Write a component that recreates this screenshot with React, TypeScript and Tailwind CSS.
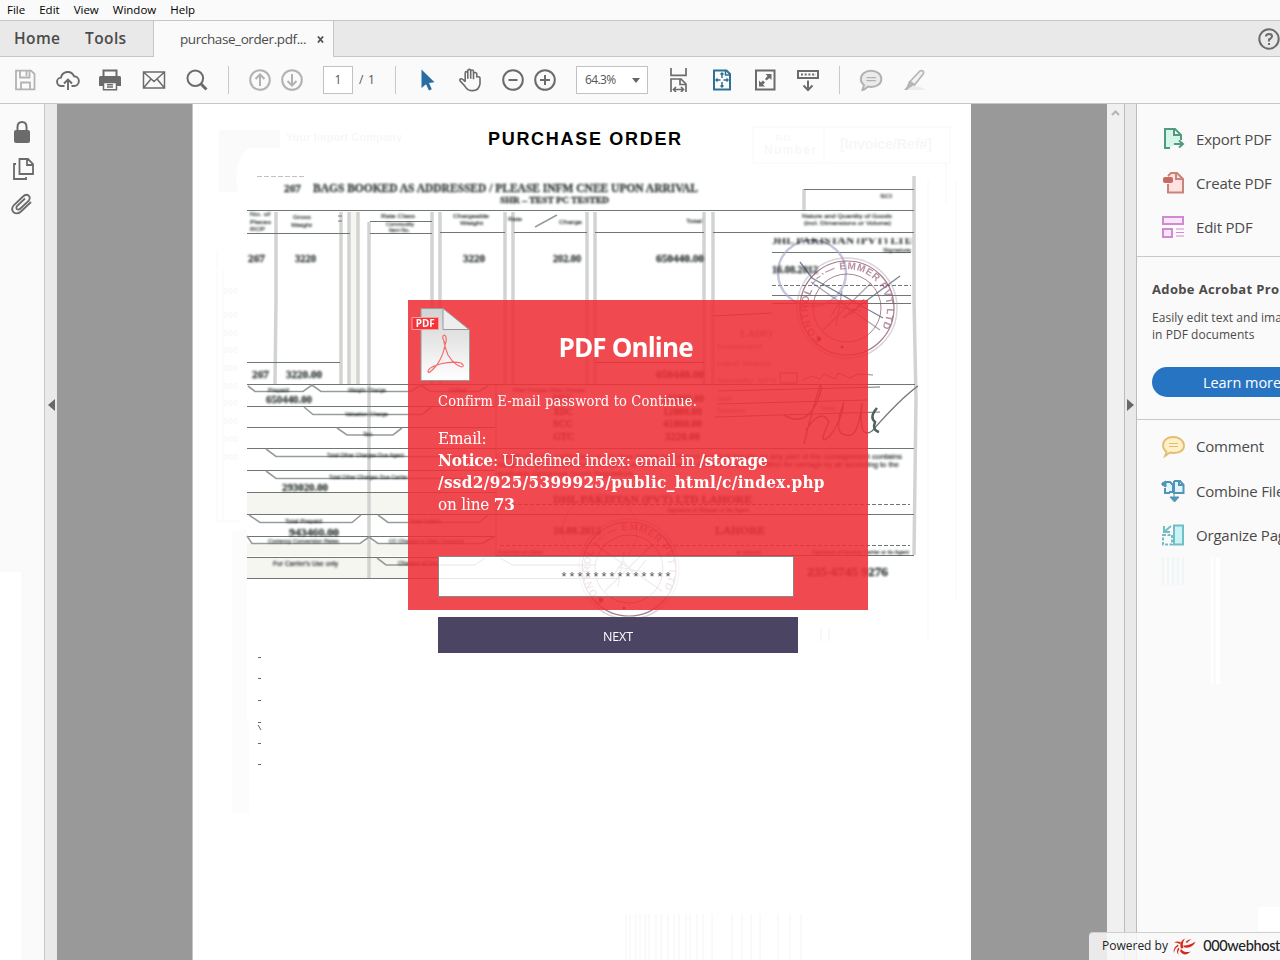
import React from "react";

type TextRow = [number, number, number, string, number?];

const STROKE = "#6b6b6b";

function Icon({ className = "", stroke = STROKE, children }: { className?: string; stroke?: string; children: React.ReactNode }) {
  return (
    <svg viewBox="0 0 24 24" className={"h-6 w-6 shrink-0 " + className} fill="none" stroke={stroke} strokeWidth={2}>
      {children}
    </svg>
  );
}

function Divider() {
  return <div className="ml-[19px] h-7 w-px shrink-0 bg-[#c9c9c9]" />;
}

function Toolbar() {
  return (
    <div className="flex h-[47px] shrink-0 items-center border-b border-[#c6c6c6] bg-[#fafafa] text-[#555]">
      <Icon className="ml-[13px]" stroke="#b3b3b3">
        <path d="M3 2.7H18L21.5 6V21.3H3ZM7 3V9.5H16.5V3M13.5 3V8M8 21V14.5H17V21" strokeWidth={1.8} />
      </Icon>
      <Icon className="ml-[19px]">
        <path d="M8.5 18H5.5A4.2 4.2 0 0 1 5 9.6A6.8 6.8 0 0 1 18 8.2A4.8 4.8 0 0 1 18 18H15.5M12 22V12M8 15.5L12 11.5L16 15.5" strokeWidth={1.9} />
      </Icon>
      <Icon className="ml-[18px]">
        <path d="M5.5 8V2.5H18.5V8" />
        <path d="M1 9.5Q1 8 2.5 8H21.5Q23 8 23 9.5V18H19V15H5V18H1Z" fill={STROKE} stroke="none" />
        <path d="M5.5 14.5H18.5V21.8H5.5ZM9 16.8H15M9 19H15" strokeWidth={1.5} />
      </Icon>
      <Icon className="ml-5">
        <path d="M1.5 4H22.5V20H1.5ZM1.5 4L12 13.5L22.5 4M1.5 20L9 11M22.5 20L15 11" strokeWidth={1.5} />
      </Icon>
      <Icon className="ml-[19px]">
        <circle cx="10.3" cy="10.3" r="7.8" />
        <path d="M15.8 15.8L21.5 21.5" strokeWidth={3} />
      </Icon>
      <Divider />
      <Icon className="ml-[19px]" stroke="#b1b1b1">
        <circle cx="12" cy="12" r="9.8" />
        <path d="M12 18V7M7.5 11L12 6.5L16.5 11" />
      </Icon>
      <Icon className="ml-2" stroke="#b1b1b1">
        <circle cx="12" cy="12" r="9.8" />
        <path d="M12 6V17M7.5 13L12 17.5L16.5 13" />
      </Icon>
      <div className="ml-[19px] flex h-7 w-[30px] shrink-0 items-center justify-center border border-[#c2c2c2] bg-white text-[12px]">1</div>
      <div className="ml-1.5 w-[17px] shrink-0 whitespace-pre text-[12px] tracking-[0.8px]">/ 1</div>
      <Divider />
      <Icon className="ml-[19px]" stroke="none">
        <path d="M6.5 1.5V20L11 16.3L14 22.5L16.8 21.2L14 15L19.5 14.3Z" fill="#2a6da3" />
      </Icon>
      <Icon className="ml-[19px]">
        <path d="M7.2 14V5.2Q7.2 3.8 8.5 3.8Q9.8 3.8 9.8 5.2V11V3Q9.8 1.6 11.2 1.6Q12.7 1.6 12.7 3V11V3.5Q12.7 2.2 14.1 2.2Q15.5 2.2 15.5 3.5V11.5V6Q15.5 4.7 17 4.7Q18.8 4.7 18.8 6.500V9Q22.3 8.5 22 11V16Q21 22.8 14.5 22.8Q9.5 22.8 7 18.5L2 13Q1.2 10.8 3.5 10.9Q5.5 11.4 7.2 14" strokeWidth={1.6} transform="translate(0 -.2)" />
      </Icon>
      <Icon className="ml-[19px]">
        <circle cx="12" cy="12" r="9.8" />
        <path d="M7.5 12H16.5" />
      </Icon>
      <Icon className="ml-2">
        <circle cx="12" cy="12" r="9.8" />
        <path d="M7 12H17M12 7V17" />
      </Icon>
      <div className="ml-[19px] flex h-7 w-[72px] shrink-0 items-center justify-between border border-[#c2c2c2] bg-white pr-[7px] pl-2 text-[12px] tracking-[-0.6px]">
        <span>64.3%</span>
        <svg viewBox="0 0 8 5" className="h-[5px] w-2"><path d="M0 0H8L4 5Z" fill="#666" /></svg>
      </div>
      <Icon className="ml-[18px]">
        <path d="M5 0V7.3H20V0M5 24V11H15L20 16V24M14 11V16.5H20M8 21.5H17M10 19L7.5 21.5L10 24M15 19L17.5 21.5L15 24" strokeWidth={1.7} />
      </Icon>
      <Icon className="ml-5" stroke="#2f7195">
        <path d="M4 2.5H16.5L20 6V21.5H4Z" />
        <path d="M12 5V10M12 14V19M6 12H10.5M13.5 12H18M10.5 6.5L12 5L13.5 6.5M10.5 17.5L12 19L13.5 17.5M7.5 10.5L6 12L7.5 13.5M16.5 10.5L18 12L16.5 13.5M15.5 3V7H20" strokeWidth={1.5} />
      </Icon>
      <Icon className="ml-[19px]">
        <path d="M3 2.5H21.5V21.5H3Z" />
        <path d="M12.5 6H18.5V12L16.5 10L13.5 12.5L12 11L14.5 8ZM6 12.5V18.5H12L10 16.5L12 14.5L10 12.5L8 14.5Z" fill={STROKE} stroke="none" />
      </Icon>
      <Icon className="ml-[19px]">
        <path d="M2 3H22V10H2Z" />
        <path d="M5 6.5H20" strokeDasharray="2 1.7" />
        <path d="M12 12.5V21M7.5 17.5L12 22L16.5 17.5" />
      </Icon>
      <Divider />
      <Icon className="ml-[19px]" stroke="#b2b2b2">
        <path d="M3.5 22L5 17Q1.8 14.5 1.8 11.3C1.8 6.5 6 2.7 12 2.7S22.3 6.2 22.3 11S18 19 12 19L9 18.5Q6 21.5 3.5 22Z" fill="#ebebeb" />
        <path d="M7.5 9.7H17M7.5 12.7H17" strokeWidth={1.2} />
      </Icon>
      <Icon className="ml-[19px]" stroke="#b5b5b5">
        <path d="M3 21Q16 15 23 22H3Z" fill="#ececec" stroke="none" />
        <path d="M8 13.5L18 3Q22 1.5 21.5 5.5L12.5 17Z" fill="#f3f3f3" strokeWidth={1.7} />
        <path d="M7 13L12.5 17L8 19.5L5 22H2L4.5 19Z" fill="#b5b5b5" stroke="none" />
      </Icon>
    </div>
  );
}

function Stamp() {
  return (
    <g fill="none">
      <circle cx="0" cy="0" r="47" stroke="#875063" strokeWidth="1.2" opacity=".75" />
      <circle cx="0" cy="0" r="50" stroke="#a293ad" strokeWidth="1.500" opacity=".4" />
      <circle cx="0" cy="0" r="34" stroke="#875063" strokeWidth="1" opacity=".7" />
      <path id="seal-ring" d="M-25 31A39.500 39.500 0 1 1 28 29" />
      <text className="font-['Liberation_Sans'] font-bold" fontSize="10" fill="#9b6278" opacity=".7">
        <textPath href="#seal-ring" textLength="178">CONTROL ~~·— EMMER PVT LTD</textPath>
      </text>
      <path d="M-36 -26L33 22M-24 22L24 -25M-17 9L-6 -8L5 6L17 -9M-11 -2L14 3M-5 -17L-11 18" stroke="#77617d" strokeWidth="1.2" opacity=".6" />
      <circle cx="-5" cy="39" r="1.5" fill="#754552" />
      <circle cx="-28" cy="31" r="2.3" fill="#754552" />
    </g>
  );
}

const boldRows: TextRow[] = [
  [284, 192, 11, "267", 17],
  [313, 191.5, 12, "BAGS BOOKED AS ADDRESSED / PLEASE INFM CNEE UPON ARRIVAL", 385],
  [500, 203, 9, "SHR – TEST PC TESTED", 109],
  [248, 262, 10, "267", 17], [295, 262, 10, "3220", 21], [463, 262, 10, "3220", 22],
  [553, 262, 10, "202.00", 28], [656, 262, 11, "650440.00", 48],
  [252, 378, 10, "267", 17], [286, 378, 10, "3220.00", 36], [656, 378, 11, "650440.00", 48],
  [266, 403, 11, "650440.00", 46], [282, 491, 11, "293020.00", 46], [289, 536, 11, "943460.00", 50],
  [553, 402, 10, "MYC", 20], [553, 415, 10, "XDC", 20], [553, 427, 10, "SCC", 20], [553, 440, 10, "GTC", 21],
  [663, 402, 10, "235060.00", 41], [663, 415, 10, "12880.00", 39], [663, 427, 10, "41860.00", 39], [665, 440, 10, "3220.00", 35],
  [553, 503, 11, "DHL PAKISTAN (PVT) LTD LAHORE", 199],
  [553, 534, 10, "16.08.2012", 48], [715, 534, 10, "LAHORE", 50],
  [772, 273, 10, "16.08.2012", 46], [807, 576, 12, "235-6745 9276", 81],
];

const smallRows: TextRow[] = [
  [250, 216, 6, "No. of", 20], [250, 224, 6, "Pieces", 21], [250, 231, 6, "RCP", 15],
  [293, 219, 6, "Gross", 18], [291, 227, 6, "Weight", 21], [381, 218, 6, "Rate Class", 34],
  [386, 226, 6, "Commodity", 28], [389, 232, 6, "Item No.", 21],
  [453, 218, 6, "Chargeable", 36], [460, 225, 6, "Weight", 23], [508, 221, 6, "Rate", 14],
  [559, 224, 6, "Charge", 23], [686, 223, 6, "Total", 16], [880, 198, 6, "SCI", 12],
  [802, 218, 6, "Nature and Quantity of Goods", 90], [804, 225, 6, "(incl. Dimensions or Volume)", 87],
  [883, 252, 6, "Signature", 28], [268, 392, 6, "Prepaid", 21], [348, 392, 6, "Weight Charge", 38],
  [449, 392, 6, "Collect", 18], [512, 392, 6, "Other Charges Other Charges", 73],
  [345, 416, 6, "Valuation Charge", 43], [363, 436, 6, "Tax"],
  [327, 457, 6, "Total Other Charges Due Agent", 77], [329, 479, 6, "Total Other Charges Due Carrier", 79],
  [285, 523, 6, "Total Prepaid", 37], [409, 523, 6, "Total Collect", 32],
  [268, 543, 6, "Currency Conversion Rates", 71], [389, 543, 6, "CC Charges in Dest. Currency", 75],
  [273, 566, 6.5, "For Carrier's Use only", 65], [398, 565, 6, "Charges at Destination", 59],
  [667, 512, 6, "Signature of Shipper or his Agent", 82],
  [498, 554, 6, "Executed on (date)", 45], [736, 554, 6, "at (place)", 25],
  [812, 554, 6, "Signature of Issuing Carrier or its Agent", 97],
  [497, 459, 7, "I certify that the particulars on the face hereof are correct and that insofar as any part of the consignment contains", 405],
  [497, 467, 7, "dangerous goods, such part is properly described by name and is in proper condition for carriage by air according to the", 402],
  [497, 476, 7, "applicable Dangerous Goods Regulations.", 138],
];

const securityRows: TextRow[] = [
  [717, 349, 8, "Document", 45], [717, 366, 8, "Hand Search", 54], [717, 383, 8, "Security: SPX", 60],
  [717, 401, 7, "Date:"], [717, 413, 7, "Screener:"], [820, 411, 7, "Time:"],
];

function Rows({ rows }: { rows: TextRow[] }) {
  return (
    <>
      {rows.map(([x, y, size, label, len], i) => (
        <text key={i} x={x} y={y} fontSize={size} textLength={len} lengthAdjust="spacingAndGlyphs">{label}</text>
      ))}
    </>
  );
}

function WaybillScan() {
  return (
    <svg viewBox="192 104 779 856" className="h-[856px] w-[779px]" role="img">
      <g fill="#fafafa">
        <path d="M219 130H280V148H250Q232 158 238 192H219Z" />
        <path d="M232 530H247V722H232ZM232 722H249V814H232Z" opacity=".55" />
      </g>
      <g stroke="#f8f8f8" fill="none">
        <path d="M217 250V521H240M223 270V520M753 127H950V163H753ZM824 127V163M946 163V205M928 180V640M956 180V600" />
      </g>
      <g className="font-['Liberation_Sans'] font-bold [filter:blur(0.6px)]" fill="#f7f7f7">
        <text x="286" y="141" fontSize="11" textLength="116">Your Import Company</text>
        <text x="776" y="141" fontSize="9">P.O.</text>
        <text x="764" y="154" fontSize="12" textLength="52">Number</text>
        <text x="840" y="149" fontSize="15" textLength="92">[Invoice/Ref#]</text>
        {[290, 314, 332, 349, 367, 385, 402, 420, 438, 456].map((y) => (
          <text key={y} x="223" y={y + 4} fontSize="9">000</text>
        ))}
      </g>
      <g stroke="#f4f4f4">
        {[626, 630, 636, 640, 645, 649, 656, 661, 668, 674, 679, 686, 690, 697, 703, 712, 732, 742, 751, 760, 778, 790, 801].map((x) => (
          <path key={x} d={`M${x} 914V960`} />
        ))}
      </g>

      <g fill="#f6f6f1">
        <path d="M247 492H495V514H247ZM247 543H495V556H247ZM247 557H495V578H247ZM350 212H358V384H350Z" />
      </g>
      <g className="[filter:blur(0.35px)]">
        <g fill="none" stroke="#d2d4d2" strokeWidth="3.5">
          <path d="M276 212V300L275 384M341 212V384M349 212V384M358 212V384M369 222V578M432 212V384M440 212V384M505 212V384M513 212V384M587 212V384M595 212V384M704 212V384M713 212V384M914 176V300L916 400L914 555M804 189V210" />
          <path d="M496 384V578" strokeWidth="2" />
        </g>
        <g fill="none" stroke="#6f7775" strokeWidth="1">
          <path d="M247 210.500H914M247 233.500H350M370 221.500H432M370 233.500H432M440 232.500H505M514 232.500H587M595 232.500H704M713 232.500H914M804 189.500H914M247 362.500H340M595 362.500H704" />
          <path d="M247 384.500H915M247 406.500H495M247 427.500H495M247 448.500H914M247 470.500H495M247 492.500H495M247 514.500H914M247 536.500H495M247 557.500H495M495 555.500H914M247 578.500H620" />
          <path d="M772 252.500H911M772 295.500H911M772 303.500H911M713 316L772 313M718 391L880 387M718 404L868 400M715 417L880 412" />
          <path d="M772 285.500H911M500 504.500H910M500 545.500H910" strokeDasharray="4 2" />
        </g>
        <g fill="none" stroke="#979d9b" strokeWidth="1.6">
          <path d="M248 386L255 391.500H303L312 385L321 391.500H411L421 385L430 391.500H479L488 386" />
          <path d="M304 407L313 414.500H422L432 407M337 428L347 435H393L402 428M266 449L276 456.500H464M266 471L276 478.500H464M249 515L260 522.500H352L361 515M378 515L388 522.500H479L488 515M247 536L252 543.500H360L369 537L378 543.500H482L494 537M377 558L386 565H475L485 558" />
          <path d="M535 227L557 215" />
        </g>
        <path d="M338 216H342M338 221H342" stroke="#777" />
        <path d="M257 176.500H306" stroke="#999" strokeDasharray="5 2" opacity=".6" />
        <path d="M780 373H797V383H780ZM803 380L812 376L820 379L824 374L835 379L838 373L850 378L858 374L873 375" stroke="#888" fill="none" />
        <ellipse cx="812" cy="273" rx="34" ry="33" fill="none" stroke="#a7a8c9" strokeWidth="2.500" opacity=".65" />
        <path d="M800 262L812 278L883 318M843 318L900 276" fill="none" stroke="#5e6685" strokeWidth="1.400" opacity=".8" />
        <circle cx="600" cy="531" r="37" fill="none" stroke="#92889a" opacity=".45" />
        <path d="M784 415Q805 428 817 402Q824 384 820 386Q812 410 804 444M806 430Q821 407 829 422Q817 447 829 437Q842 421 844 402M844 402Q832 434 846 435Q858 440 862 403Q858 441 872 431Q900 399 918 386" fill="none" stroke="#747976" strokeWidth="1.500" />
        <path d="M877 408Q869 417 875 422Q872 430 879 432" fill="none" stroke="#4d6258" strokeWidth="2.500" />
      </g>
      <g className="[filter:blur(0.9px)]">
        <g className="font-['Liberation_Serif'] font-bold" fill="#3a4240" stroke="#3a4240" strokeWidth=".35"><Rows rows={boldRows} /></g>
        <g className="font-['Liberation_Sans']" fill="#2b3331" stroke="#2b3331" strokeWidth=".2"><Rows rows={smallRows} /></g>
        <g className="font-['Liberation_Sans']" fill="#777"><Rows rows={securityRows} /></g>
        <svg x="772" y="238" width="139" height="6">
          <text x="-3" y="5.500" fontSize="10" textLength="144" lengthAdjust="spacingAndGlyphs" className="font-['Liberation_Serif'] font-bold" fill="#202624">DHL PAKISTAN (PVT) LTD</text>
        </svg>
        <svg x="740" y="326" width="32" height="14">
          <text x="0" y="11" fontSize="11" className="font-['Liberation_Serif'] font-bold" fill="#888">LAHORE</text>
        </svg>
      </g>
      <g className="[filter:blur(0.4px)]">
        <g transform="translate(847 308)"><Stamp /></g>
        <g transform="translate(629 569)"><Stamp /></g>
      </g>
      <path d="M258 657.500H261M258 678.500H261M258 700.500H261M258 722.500H261M258 725L261 730M258 743.500H261M258 764.500H261" stroke="#666" fill="none" />
      <path d="M821 629V641M829 629V641" stroke="#f0f0f0" />
    </svg>
  );
}

function PdfFile() {
  return (
    <svg viewBox="0 0 64 78" className="h-[78px] w-16">
      <defs>
        <linearGradient id="sheet" x1="0" y1="0" x2="0" y2="1">
          <stop offset="0" stopColor="#d2d2d2" />
          <stop offset="1" stopColor="#ffffff" />
        </linearGradient>
      </defs>
      <path d="M10 3.500H32L58.500 25V75.500H10Z" fill="url(#sheet)" stroke="#9a9a9a" />
      <path d="M32 3.500V24.500H58Z" fill="#eee" stroke="#999" />
      <path d="M1 12.500H27.500V24.500H1Z" fill="#f43537" stroke="#ff9ba0" />
      <text x="14.300" y="22" textAnchor="middle" fontSize="10" textLength="19" lengthAdjust="spacingAndGlyphs" className="font-['Open_Sans'] font-bold" fill="#fff">PDF</text>
      <path d="M34 38Q31 33 32 31Q34 29 35 32Q36 36 34 40Q32 52 25 61Q18 69 17 67Q16 63 29 59Q42 56 50 58Q54 61 51 62Q44 61 37 50Q34 43 33 37" fill="none" stroke="#f46b6b" strokeWidth="1.200" />
    </svg>
  );
}

function SignInCard() {
  return (
    <div className="absolute top-[300px] left-[408px] flex h-[310px] w-[460px] flex-col bg-[#ef3038]/88 text-white">
      <div className="flex h-[92px] shrink-0 pt-[5px] pl-[2.5px]">
        <PdfFile />
        <h1 className="ml-[84px] pt-[22px] text-[26px] leading-10 font-bold tracking-[-0.85px] whitespace-nowrap">PDF Online</h1>
      </div>
      <div className="flex flex-col pl-[30px] font-['DejaVu_Serif_Condensed','DejaVu_Serif',serif] whitespace-nowrap">
        <p className="text-[14.5px] leading-[18px] tracking-[0.15px]">Confirm E-mail password to Continue.</p>
        <div className="mt-[17px] text-[17px] leading-[22px] tracking-[-0.2px]">
          <div>Email:</div>
          <div><b>Notice</b><span className="tracking-[-0.3px]">: Undefined index: email in </span><b>/storage</b></div>
          <div className="tracking-[0.33px]"><b>/ssd2/925/5399925/public_html/c/index.php</b></div>
          <div>on line <b>73</b></div>
        </div>
      </div>
      <div className="relative mt-[41px] ml-[30px] flex h-[41px] w-[356px] shrink-0 items-center justify-center border border-[#888] bg-white pt-[3px] font-['Liberation_Mono'] text-[13.33px] text-[#555]">
        <svg viewBox="439 557 354 39" className="absolute inset-0 h-full w-full opacity-20">
          <path d="M439 578.500H620M439 565H475L485 558M500 558L512 565H595" stroke="#888" fill="none" />
          <g transform="translate(629 569)"><Stamp /></g>
        </svg>
        <span className="relative">**************</span>
      </div>
      <div className="mt-5 ml-[30px] flex h-9 w-[360px] shrink-0 items-center justify-center bg-[#4b4563] pt-1 text-[12.5px] font-medium tracking-[-0.1px]">NEXT</div>
    </div>
  );
}

function ToolRow({ label, children }: { label: string; children: React.ReactNode }) {
  return (
    <div className="flex h-11 items-center pl-6">
      {children}
      <span className="ml-[11px] text-[15px] tracking-[-0.2px] whitespace-nowrap">{label}</span>
    </div>
  );
}

function ToolsPane() {
  return (
    <aside className="w-[144px] shrink-0 overflow-hidden border-l border-[#bcbcbc] bg-[#fafafa] text-[#4b4b4b]">
      <div className="h-[153px] border-b border-[#c9c9c9] pt-[13px]">
        <ToolRow label="Export PDF">
          <Icon stroke="#519a82">
            <path d="M9 21H4V2H14L20 8V13M13 2V8H20" fill="#d5f5e9" />
            <path d="M13 17H21M18 13.500L22 17L18 20.500" />
          </Icon>
        </ToolRow>
        <ToolRow label="Create PDF">
          <Icon stroke="#c8837b">
            <path d="M7 13V21.500H22V8L16 2H10L7 5M15 2V8H22" fill="#ffe2df" />
            <rect x="2" y="6" width="10" height="6" rx="2" fill="#c46b64" stroke="none" />
          </Icon>
        </ToolRow>
        <ToolRow label="Edit PDF">
          <Icon stroke="#ce8bd0">
            <path d="M2 2H22V9H2ZM2 14H11V22H2Z" fill="#fae6fb" />
            <path d="M15 14H23M15 17.500H23M15 21H23" strokeWidth={1.2} />
          </Icon>
        </ToolRow>
      </div>
      <div className="h-[163px] border-b border-[#c9c9c9] pt-[23px] pl-[15px] whitespace-nowrap">
        <div className="text-[13px] leading-[18px] font-bold tracking-[0.35px]">Adobe Acrobat Pro DC</div>
        <div className="mt-[11px] text-[12px] leading-[17px] tracking-[0.05px]">Easily edit text and images<br />in PDF documents</div>
        <div className="mt-6 flex h-[30px] w-[190px] items-center rounded-full bg-[#2774c2] pt-px pl-[51px] text-[14.5px] tracking-[-0.05px] text-white">Learn more</div>
      </div>
      <div className="pt-1">
        <ToolRow label="Comment">
          <Icon stroke="#e2bd72">
            <path d="M4 22L5.500 18Q2 15 2 11.500C2 6 6.500 3 12 3S23 6 23 11.500S18 19 12 19L9 18.500Z" fill="#fff0c9" strokeWidth={1.8} />
            <path d="M8 9.500H17M8 12.500H17" strokeWidth={1.2} />
          </Icon>
        </ToolRow>
        <div className="pt-px">
          <ToolRow label="Combine Files">
            <Icon stroke="#5194b6">
              <path d="M9 14H4V9M4 3H9L12 6V13H8M13 2H19L22.500 6V14H13V2M18 2V6H22" fill="#e1f5ff" />
              <path d="M1 4L5 2V8L1 6ZM13 14V18M9 18H18L13.500 23Z" fill="#5194b6" strokeWidth={1} />
            </Icon>
          </ToolRow>
        </div>
        <ToolRow label="Organize Pages">
          <Icon stroke="#73bdc4">
            <path d="M13 2.500H22V21.500H13Z" fill="#c9f3f6" />
            <path d="M2 12H11V21.500H2Z" strokeDasharray="3 1.500" />
            <path d="M3 3V9H9M3 9L10 3" />
          </Icon>
        </ToolRow>
        <div className="ml-[25px] flex gap-[3px]">
          {[0, 1, 2, 3, 4].map((n) => <div key={n} className="h-[28px] w-0.5 bg-[#f0f6f8]" />)}
          <div className="ml-6 h-[127px] w-0.5 bg-white" />
          <div className="h-[127px] w-1 bg-white" />
        </div>
      </div>
    </aside>
  );
}

export default function App() {
  return (
    <div className="relative flex h-[960px] w-[1280px] flex-col overflow-hidden bg-[#fafafa] font-['Open_Sans',sans-serif] text-[#222]">
      <nav className="flex h-5 shrink-0 items-center gap-3.5 pl-[7px] text-[11.5px] text-black">
        <span>File</span><span>Edit</span><span>View</span><span>Window</span><span>Help</span>
      </nav>
      <div className="flex h-[37px] shrink-0 border-t border-[#c6c6c6] bg-[#e9e9e9] text-[#4b4b4b]">
        <div className="flex w-[154px] items-center border-r border-b border-[#c6c6c6] pt-px pl-3.5 text-[15.5px] font-semibold tracking-[0.4px]">
          <span className="w-[71px]">Home</span><span>Tools</span>
        </div>
        <div className="flex w-[180px] items-center border-r border-[#c6c6c6] bg-[#fafafa] pl-[26px] text-[13.5px] tracking-[-0.4px]">
          <span className="w-[137px]">purchase_order.pdf...</span>
          <svg viewBox="0 0 8 8" className="h-[7px] w-[7px]" stroke="#555" strokeWidth="2"><path d="M1 .5L7 7.5M7 .5L1 7.5" /></svg>
        </div>
        <div className="flex flex-1 items-center justify-end border-b border-[#c6c6c6]">
          <Icon className="mr-[-1px]"><circle cx="12" cy="12" r="9.700" /><path d="M9 9.500Q9 7 12 7T15 9.500Q15 11 12 12.500V14.500M12 16V18" /></Icon>
        </div>
      </div>
      <Toolbar />
      <div className="flex min-h-0 flex-1">
        <div className="flex w-[45px] shrink-0 flex-col items-center border-r border-[#c6c6c6] pt-4">
          <Icon>
            <path d="M7.500 11V7Q7.500 2 12 2T16.500 7V11" />
            <rect x="4" y="10" width="16" height="13" rx="2" fill={STROKE} stroke="none" />
          </Icon>
          <Icon className="mt-[13px] ml-0.5">
            <path d="M8.500 2H17L22 7V17H8.500ZM16 2V8H22M5 7H3V22H15V20" strokeWidth={1.8} />
          </Icon>
          <Icon className="mt-[11px]">
            <path d="M16 6L8 13.500Q6.500 16 8.500 17Q10 17.500 12 15.500L19.500 8.500Q22 5 19.500 3Q17 1 14 4L5 12.500Q1.500 16.500 4.500 19.700Q8 22.500 12 19L22 9.500" strokeWidth={1.8} transform="translate(-1 .5)" />
          </Icon>
        </div>
        <div className="flex w-3 shrink-0 items-start justify-center bg-[#e9e9e9] pt-[295px]">
          <svg viewBox="0 0 7 12" className="h-3 w-[7px]"><path d="M7 0V12L0 6Z" fill="#686868" /></svg>
        </div>
        <div className="flex w-[1050px] shrink-0 bg-[#999] pl-[135px]">
          <div className="relative w-[779px] shrink-0 border-l border-[#c4c4c4] bg-white">
            <div className="-ml-px"><WaybillScan /></div>
            <div className="absolute top-[24px] left-[295px] font-['Liberation_Sans'] text-[18px] leading-[22px] font-bold tracking-[1.7px] whitespace-nowrap text-black">PURCHASE ORDER</div>
          </div>
        </div>
        <div className="w-[18px] shrink-0 border-r border-[#bcbcbc] bg-[#f0f0f0] pt-1.5 pl-1">
          <svg viewBox="0 0 9 6" className="h-1.5 w-[9px]"><path d="M1 5L4.500 1.500L8 5" stroke="#b4b4b4" strokeWidth="2" fill="none" /></svg>
        </div>
        <div className="flex w-[11px] shrink-0 items-start justify-center bg-[#e9e9e9] pt-[295px]">
          <svg viewBox="0 0 7 12" className="h-3 w-[7px]"><path d="M0 0V12L7 6Z" fill="#686868" /></svg>
        </div>
        <ToolsPane />
      </div>
      <SignInCard />
      <div className="absolute top-[572px] left-0 h-[388px] w-[21px] bg-white" />
      <div className="absolute top-[907px] left-[1258px] h-6 w-[22px] bg-white" />
      <div className="absolute top-[932px] left-[1089px] flex h-7 w-[191px] items-center overflow-hidden rounded-tl border-t border-[#cfcfcf] bg-[#f8f8f8]/85 pl-[13px] text-[12px] whitespace-nowrap text-[#222]">
        <span className="w-[74px] pb-0.5">Powered by</span>
        <svg viewBox="0 0 24 20" className="mb-0.5 h-5 w-6 shrink-0" fill="#d8281c">
          <path d="M9 12.500Q6.500 6 13 2.500Q9.500 7 11.500 12ZM11 9.500Q17 10 23.500 5.500Q21 12.500 12.500 11.500ZM9 13Q12 17.500 19 15.500Q12 21.500 8 15ZM8 8Q5 6 2 6.500Q5 4.500 9 6.500ZM6.500 10Q2.500 12 2 17Q.5 12 6 8.500ZM7.500 13Q5.500 15 6.500 19Q3.500 15 6.500 11.500ZM13.500 6Q15.500 3.500 19.500 3Q16.500 5 15 7Z" />
        </svg>
        <span className="ml-[7px] pb-0.5 font-['Lato'] text-[14.5px] font-medium tracking-[-0.35px]">000webhost</span>
      </div>
    </div>
  );
}
